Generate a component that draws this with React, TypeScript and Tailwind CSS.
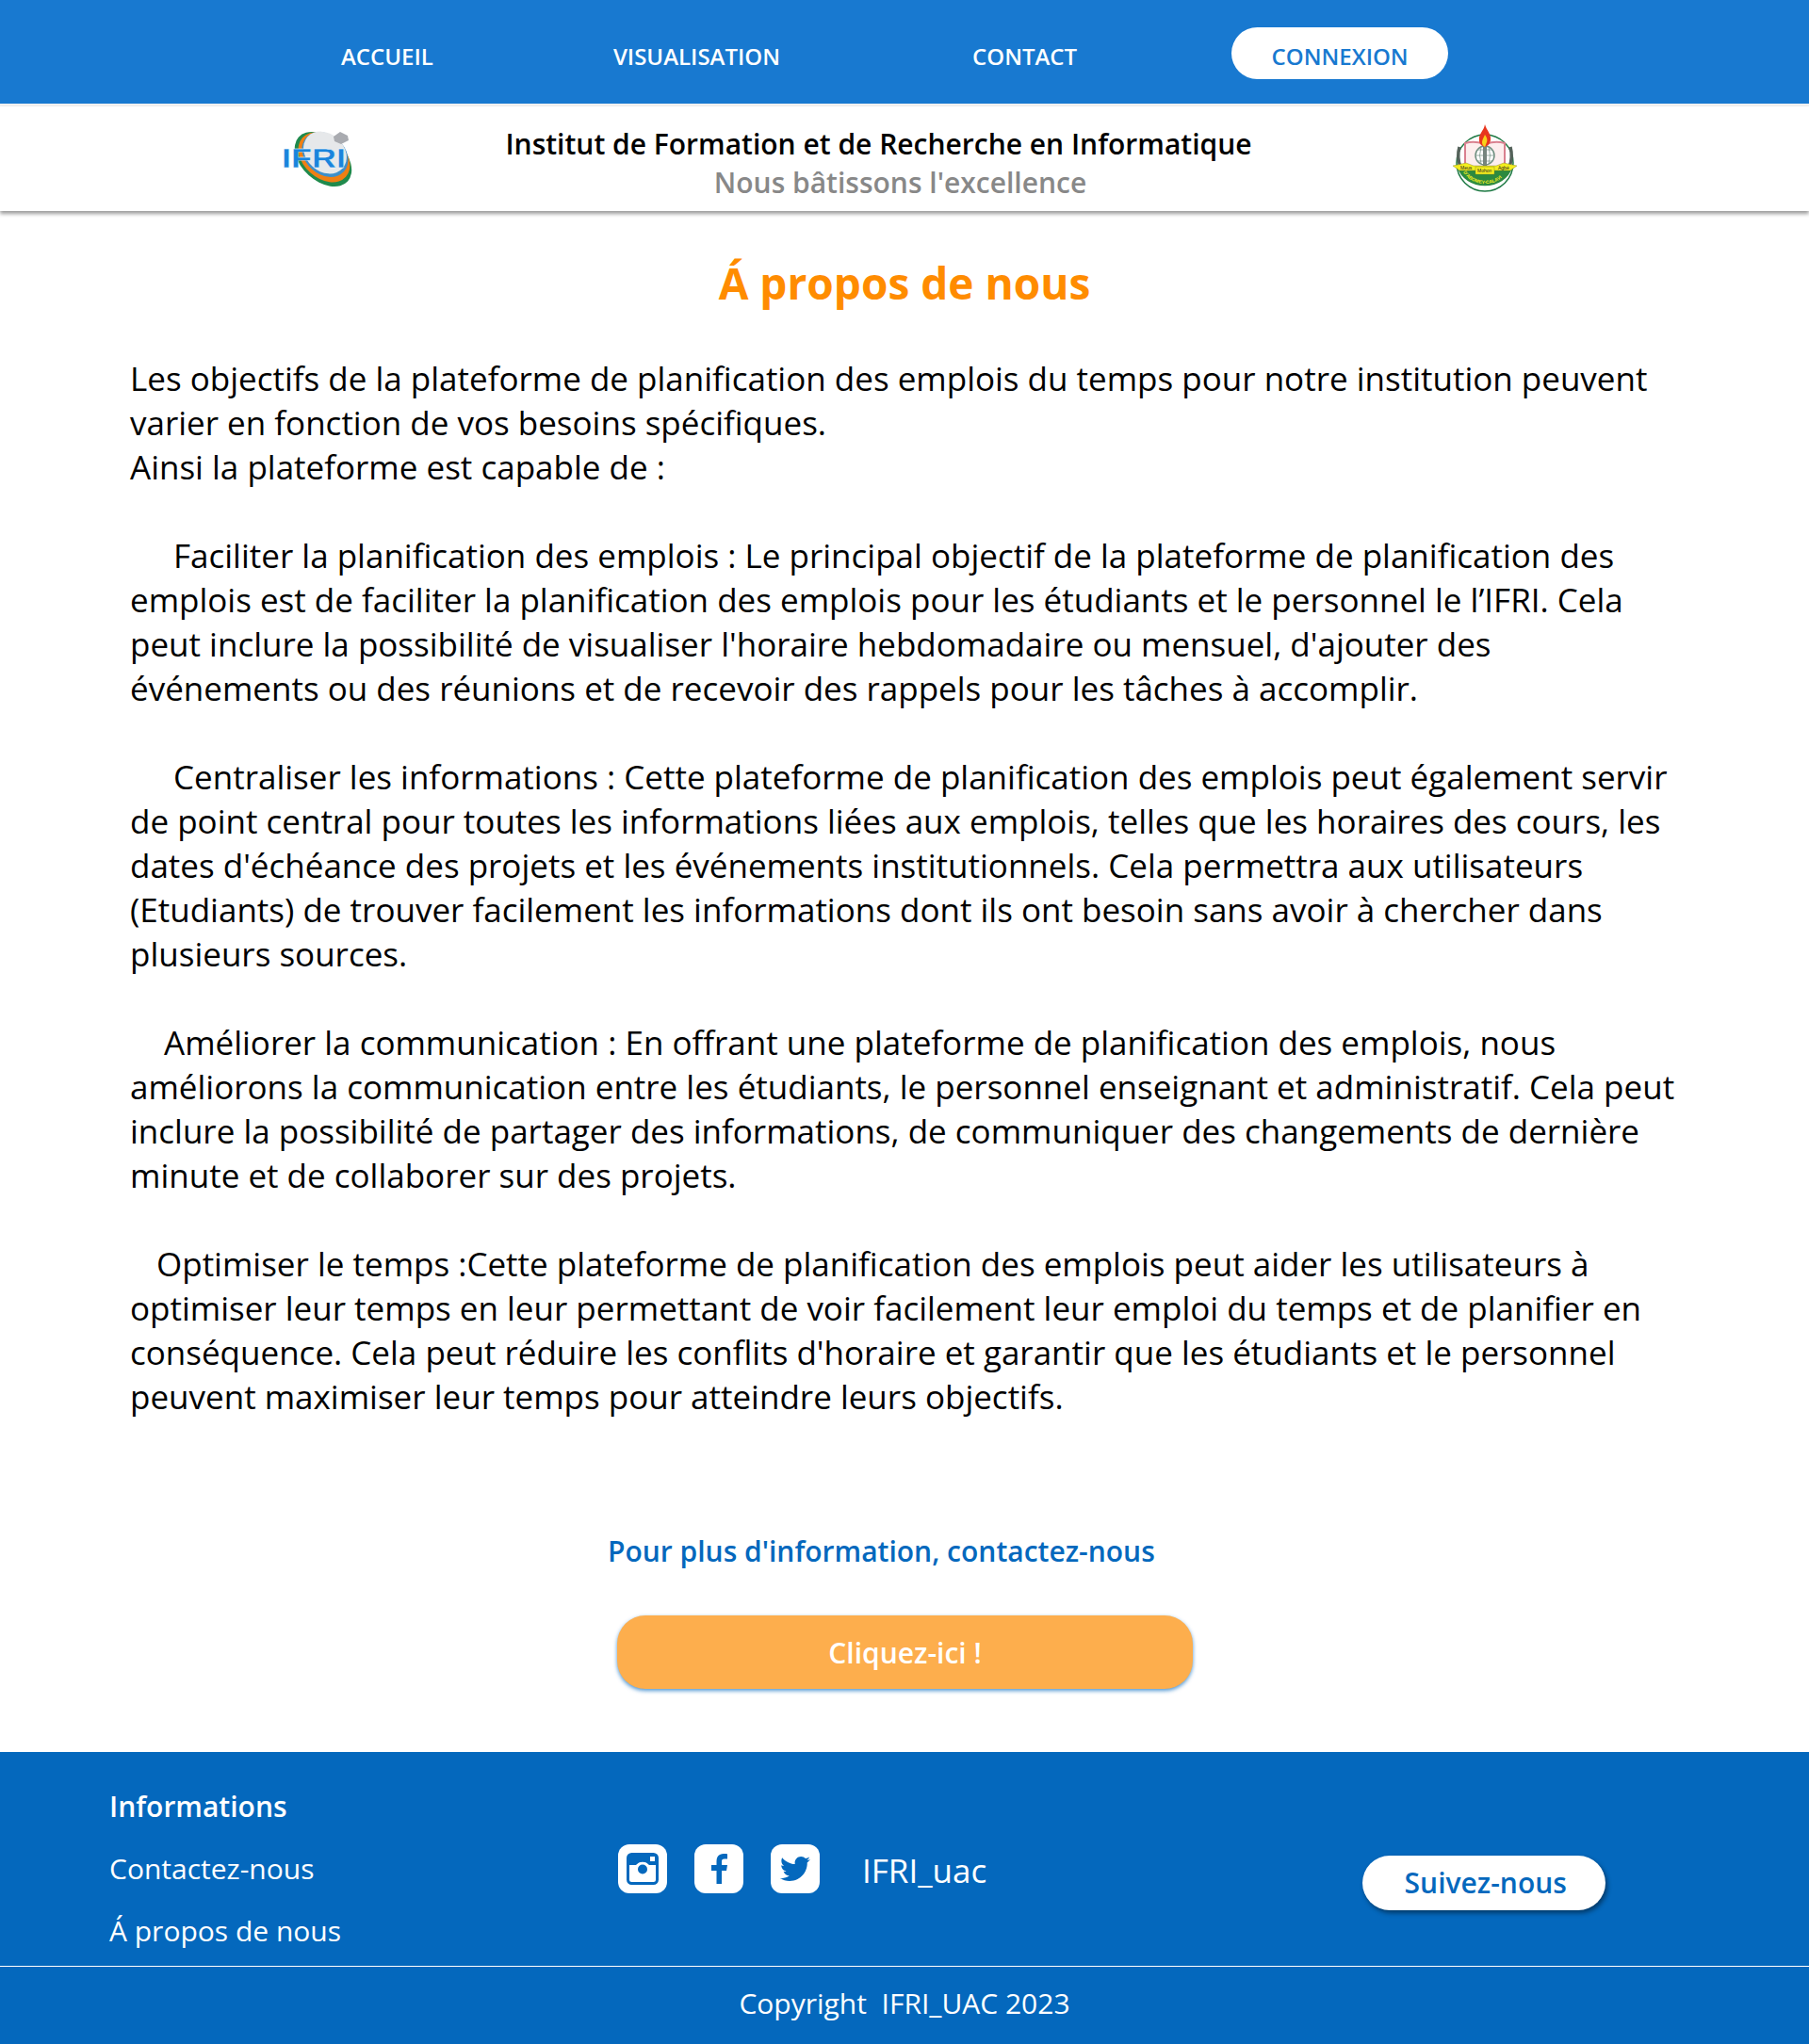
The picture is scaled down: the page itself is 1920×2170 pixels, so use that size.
const sections = [
    {
        indent: 'w-[46px]',
        lines: [
            'Faciliter la planification des emplois : Le principal objectif de la plateforme de planification des',
            'emplois est de faciliter la planification des emplois pour les étudiants et le personnel le l’IFRI. Cela',
            "peut inclure la possibilité de visualiser l'horaire hebdomadaire ou mensuel, d'ajouter des",
            'événements ou des réunions et de recevoir des rappels pour les tâches à accomplir.',
        ],
    },
    {
        indent: 'w-[46px]',
        lines: [
            'Centraliser les informations : Cette plateforme de planification des emplois peut également servir',
            'de point central pour toutes les informations liées aux emplois, telles que les horaires des cours, les',
            "dates d'échéance des projets et les événements institutionnels. Cela permettra aux utilisateurs",
            '(Etudiants) de trouver facilement les informations dont ils ont besoin sans avoir à chercher dans',
            'plusieurs sources.',
        ],
    },
    {
        indent: 'w-[36px]',
        lines: [
            'Améliorer la communication : En offrant une plateforme de planification des emplois, nous',
            'améliorons la communication entre les étudiants, le personnel enseignant et administratif. Cela peut',
            'inclure la possibilité de partager des informations, de communiquer des changements de dernière',
            'minute et de collaborer sur des projets.',
        ],
    },
    {
        indent: 'w-[28px]',
        lines: [
            'Optimiser le temps :Cette plateforme de planification des emplois peut aider les utilisateurs à',
            'optimiser leur temps en leur permettant de voir facilement leur emploi du temps et de planifier en',
            "conséquence. Cela peut réduire les conflits d'horaire et garantir que les étudiants et le personnel",
            'peuvent maximiser leur temps pour atteindre leurs objectifs.',
        ],
    },
];

function IfriLogo() {
    return (
        <svg viewBox="0 0 78 70" className="w-[78px] h-[70px] -mt-[6px] -ml-[1px]">
            <ellipse cx="46" cy="38" rx="35" ry="23" fill="#1f8a4c" transform="rotate(42 46 38)" />
            <ellipse cx="47" cy="36" rx="31" ry="22" fill="#f07f13" transform="rotate(42 47 36)" />
            <ellipse cx="48" cy="33" rx="27" ry="21" fill="#3d8fca" transform="rotate(42 48 33)" />
            <ellipse cx="48" cy="31" rx="25" ry="20" fill="#e6e8ea" transform="rotate(42 48 31)" />
            <path d="M57 14l7-5 8 4 1 5-8 4-7-3z" fill="#a9abb0" />
            <text x="2" y="47" fontFamily="Liberation Sans" fontWeight="700" fontSize="29" fill="#1a84dc" stroke="#fff" strokeWidth="0.3" textLength="68" lengthAdjust="spacingAndGlyphs">IFRI</text>
        </svg>
    );
}

function UacLogo() {
    return (
        <svg viewBox="0 0 68 72" className="w-[68px] h-[72px] -mt-[2px]">
            <defs>
                <path id="uac-arc" d="M10 48a25 21 0 0 0 48 0" />
            </defs>
            <circle cx="34" cy="41" r="30" fill="#fff" stroke="#1f7a45" strokeWidth="1.5" />
            <path d="M5 46h58a30 26 0 0 1-58 0z" fill="#2c8a3f" />
            <path d="M13 20q10-3 20 1v24H13zM35 21q10-4 20-1v25H35z" fill="#fdeeee" stroke="#d9808f" strokeWidth="2" />
            <circle cx="34" cy="33" r="10" fill="#fff" stroke="#6f8f80" strokeWidth="1.5" />
            <path d="M24 33h20M26 27h16M26 39h16M30 24q-3 9 0 18M38 24q3 9 0 18" stroke="#7f9a8e" strokeWidth="0.8" fill="none" />
            <rect x="32" y="20" width="4" height="28" fill="#76857e" />
            <path d="M34 0c2 7 7 10 6 17-1 4-3 6-6 7-3-1-6-3-6-7-1-7 5-10 6-17z" fill="#e8351e" />
            <path d="M34 11c2 3 3 5 2 8-1 2-1 3-2 5-2-1-3-3-3-5 0-3 2-5 3-8z" fill="#f7d21b" />
            <path d="M7 24q-3 11 1 21M61 24q3 11-1 21" stroke="#54625a" strokeWidth="3.5" fill="none" />
            <path d="M0 44l14-3 8 3h24l8-3 14 3-7 5H7z" fill="#f4ee1e" stroke="#7c7c22" strokeWidth="0.4" />
            <rect x="24" y="45" width="20" height="8" fill="#f4ee1e" stroke="#7c7c22" strokeWidth="0.4" />
            <text x="8" y="47.5" fontFamily="Liberation Sans" fontSize="5" fill="#222">Meus</text>
            <text x="48" y="47.5" fontFamily="Liberation Sans" fontSize="5" fill="#222">Agbé</text>
            <text x="26" y="51" fontFamily="Liberation Sans" fontSize="5" fill="#222">Mohon</text>
            <text fontFamily="Liberation Sans" fontWeight="700" fontSize="5" fill="#f4ee1e">
                <textPath href="#uac-arc" startOffset="3">D'ABOMEY-CALAVI</textPath>
            </text>
        </svg>
    );
}

function InstagramTile() {
    return (
        <div className="w-[52px] h-[52px] rounded-[12px] bg-white flex items-center justify-center">
            <svg viewBox="0 0 34 34" className="w-[34px] h-[34px]">
                <rect x="1.5" y="1.5" width="31" height="31" rx="4" fill="none" stroke="#0468bd" strokeWidth="3" />
                <path d="M2 13h8a9 9 0 0 1 14 0h8V4a2 2 0 0 0-2-2H4a2 2 0 0 0-2 2z" fill="#0468bd" />
                <circle cx="17" cy="17.5" r="7.5" fill="#fff" />
                <circle cx="17" cy="17.5" r="5" fill="#0468bd" />
                <rect x="25" y="4" width="5" height="5" fill="#fff" />
            </svg>
        </div>
    );
}

function FacebookTile() {
    return (
        <div className="ml-[29px] w-[52px] h-[52px] rounded-[12px] bg-white flex items-end justify-center">
            <svg viewBox="0 0 17 32" className="w-[17px] h-[32px] mb-[10px]">
                <path d="M11 32V18h5l1-6h-6V8.5c0-1.7.5-3 3-3h3V.3C16.4.2 15 0 13 0 8.7 0 5.5 2.7 5.5 7.7V12H0v6h5.5v14z" fill="#0468bd" />
            </svg>
        </div>
    );
}

function TwitterTile() {
    return (
        <div className="ml-[29px] w-[52px] h-[52px] rounded-[12px] bg-white flex items-center justify-center">
            <svg viewBox="0 0 512 512" className="w-[32px] h-[32px]">
                <path d="M459.37 151.716c.325 4.548.325 9.097.325 13.645 0 138.72-105.583 298.558-298.558 298.558-59.452 0-114.68-17.219-161.137-47.106 8.447.974 16.568 1.299 25.34 1.299 49.055 0 94.213-16.568 130.274-44.832-46.132-.975-84.792-31.188-98.112-72.772 6.498.974 12.995 1.624 19.818 1.624 9.421 0 18.843-1.3 27.614-3.573-48.081-9.747-84.143-51.98-84.143-102.985v-1.299c13.969 7.797 30.214 12.67 47.431 13.319-28.264-18.843-46.781-51.005-46.781-87.391 0-19.492 5.197-37.36 14.294-52.954 51.655 63.675 129.3 105.258 216.365 109.807-1.624-7.797-2.599-15.918-2.599-24.04 0-57.828 46.782-104.934 104.934-104.934 30.213 0 57.502 12.67 76.67 33.137 23.715-4.548 46.456-13.32 66.599-25.34-7.798 24.366-24.366 44.833-46.132 57.827 21.117-2.273 41.584-8.122 60.426-16.243-14.292 20.791-32.161 39.308-52.628 54.253z" fill="#0468bd" />
            </svg>
        </div>
    );
}

export default function App() {
    return (
        <div className="w-[1920px] h-[2170px] flex flex-col bg-white text-black font-['Open_Sans',sans-serif] overflow-hidden">
            {/* Nav */}
            <nav className="h-[110px] pt-[10px] bg-[#1879d0] flex items-center pl-[362px] text-[24px] font-semibold text-white shrink-0">
                <a className="mr-[191px]">ACCUEIL</a>
                <a className="mr-[204px]">VISUALISATION</a>
                <a className="mr-[164px]">CONTACT</a>
                <button className="w-[230px] h-[55px] -mt-[7px] pt-[6px] rounded-full bg-white text-[#1879d0] font-semibold text-center">CONNEXION</button>
            </nav>
            <div className="h-[3px] bg-[#f1f1f1] shrink-0" />

            {/* Header */}
            <header className="h-[111px] bg-white shadow-[0_3px_4px_rgba(0,0,0,0.4)] flex items-center pl-[298px] shrink-0 z-10">
                <IfriLogo />
                <div className="w-[1167px] mt-[8px] flex flex-col items-center text-[30px] font-semibold leading-[41px]">
                    <span className="-ml-[52px] text-black">Institut de Formation et de Recherche en Informatique</span>
                    <span className="-ml-[6px] text-[#888888]">Nous bâtissons l'excellence</span>
                </div>
                <UacLogo />
            </header>

            {/* Content */}
            <main className="flex-1 flex flex-col">
                <h1 className="mt-[45px] text-center text-[46px] leading-[62px] font-bold text-[#ff8c00]">Á propos de nous</h1>
                <div className="mt-[47px] pl-[138px] text-[35px] leading-[47px] whitespace-nowrap">
                    <p>Les objectifs de la plateforme de planification des emplois du temps pour notre institution peuvent</p>
                    <p>varier en fonction de vos besoins spécifiques.</p>
                    <p>Ainsi la plateforme est capable de :</p>
                    {sections.map((section) => (
                        <div key={section.lines[0]} className="mt-[47px]">
                            {section.lines.map((line, i) => (
                                <p key={line}>
                                    {i === 0 && <span className={`inline-block ${section.indent}`} />}
                                    {line}
                                </p>
                            ))}
                        </div>
                    ))}
                </div>
                <a className="mt-[120px] ml-[645px] text-[30px] leading-[41px] font-semibold text-[#0468bd]">Pour plus d'information, contactez-nous</a>
                <button className="mt-[48px] ml-[655px] w-[611px] h-[78px] rounded-[30px] bg-[#fdae4d] text-white text-[30px] font-semibold shadow-[0_2px_4px_rgba(4,104,189,0.7)]">Cliquez-ici !</button>
            </main>

            {/* Footer */}
            <footer className="h-[310px] bg-[#0468bd] text-white flex flex-col shrink-0">
                <div className="h-[228px] flex border-b border-white">
                    <div className="w-[656px] pl-[116px] pt-[37px] flex flex-col gap-[25px] text-[30px] leading-[41px]">
                        <span className="font-semibold">Informations</span>
                        <a>Contactez-nous</a>
                        <a>Á propos de nous</a>
                    </div>
                    <div className="pt-[98px] flex items-start">
                        <InstagramTile />
                        <FacebookTile />
                        <TwitterTile />
                        <span className="ml-[45px] text-[35px] leading-[56px]">IFRI_uac</span>
                    </div>
                    <button className="ml-[399px] mt-[110px] w-[258px] h-[58px] pb-[2px] pl-[3px] rounded-full bg-white text-[#0468bd] text-[30px] font-semibold shadow-[2px_3px_5px_rgba(0,0,0,0.45)]">Suivez-nous</button>
                </div>
                <div className="flex-1 pb-[5px] flex items-center justify-center text-[30px]">Copyright&nbsp; IFRI_UAC 2023</div>
            </footer>
        </div>
    );
}
